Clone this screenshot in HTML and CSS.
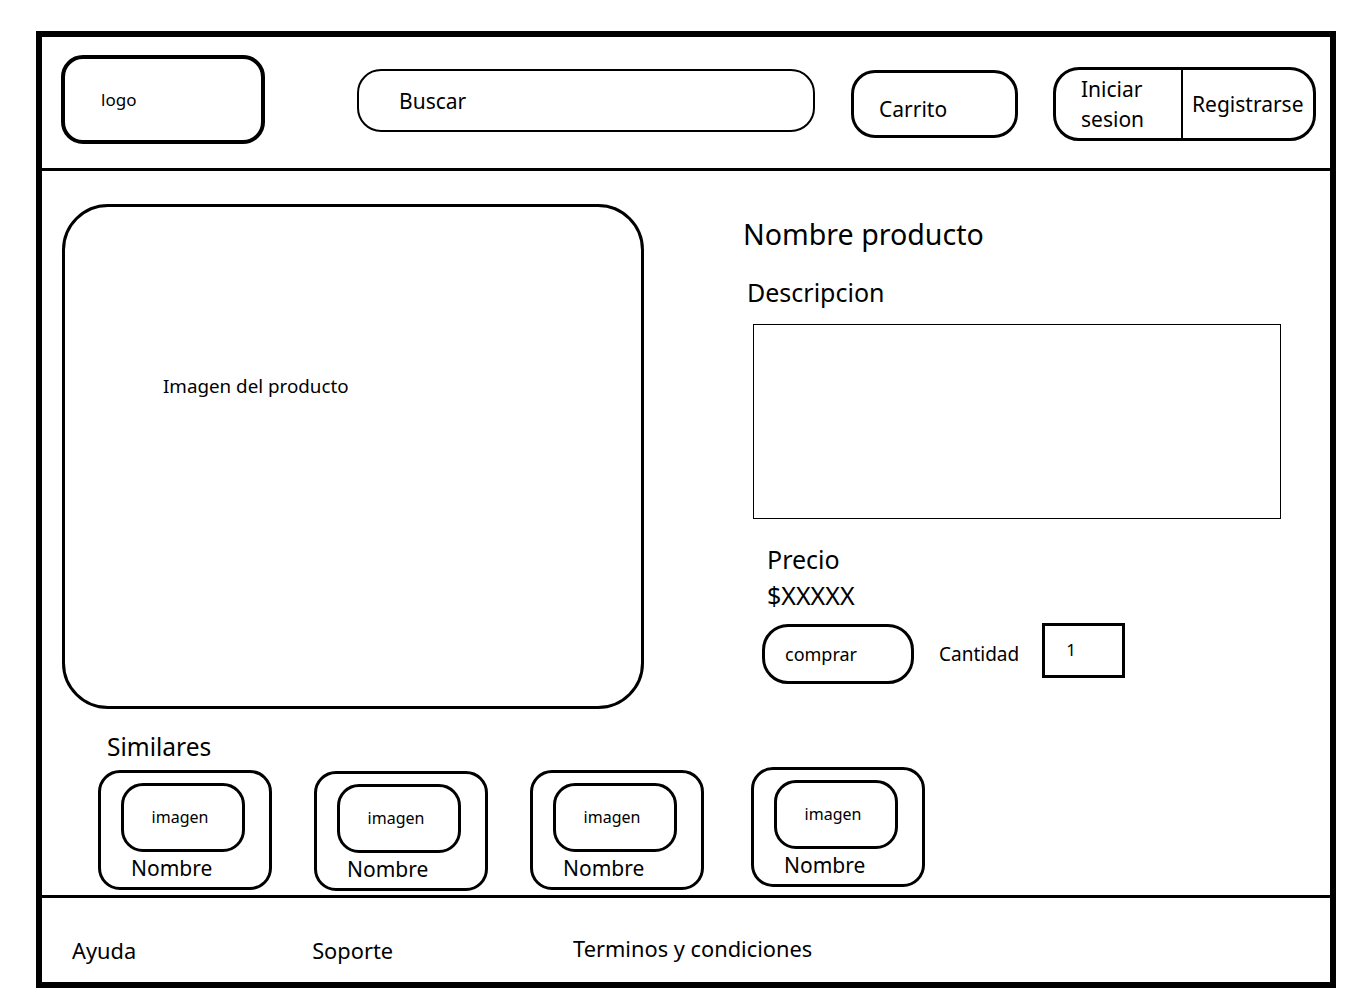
FILE: index.html
```html
<!DOCTYPE html>
<html lang="es">
<head>
  <meta charset="UTF-8" />
  <meta name="viewport" content="width=device-width, initial-scale=1.0" />
  <title>Producto</title>
  <link rel="stylesheet" href="styles.css">
</head>
<body>
  <div class="page">

    <!-- Header -->
    <header class="header">
      <div class="logo">logo</div>
      <div class="search">Buscar</div>
      <div class="cart">Carrito</div>
      <div class="auth">
        <div class="login">Iniciar<br>sesion</div>
        <div class="register">Registrarse</div>
      </div>
    </header>

    <!-- Producto -->
    <main class="main">
      <div class="product">
        <div class="product-image">Imagen del producto</div>

        <div class="details">
          <h1 class="title">Nombre producto</h1>
          <div class="desc-label">Descripcion</div>
          <div class="desc-box"></div>
          <div class="price">Precio<br>$XXXXX</div>
          <div class="actions">
            <div class="buy">comprar</div>
            <div class="qty-label">Cantidad</div>
            <div class="qty">1</div>
          </div>
        </div>
      </div>

      <div class="similar-title">Similares</div>
      <div class="similar">
        <div class="card">
          <div class="card-img">imagen</div>
          <div class="card-name">Nombre</div>
        </div>
        <div class="card card-2">
          <div class="card-img">imagen</div>
          <div class="card-name">Nombre</div>
        </div>
        <div class="card">
          <div class="card-img">imagen</div>
          <div class="card-name">Nombre</div>
        </div>
        <div class="card card-4">
          <div class="card-img">imagen</div>
          <div class="card-name">Nombre</div>
        </div>
      </div>
    </main>

    <!-- Footer -->
    <footer class="footer">
      <span class="help">Ayuda</span>
      <span class="support">Soporte</span>
      <span class="terms">Terminos y condiciones</span>
    </footer>

  </div>
</body>
</html>
```

FILE: styles.css
```css
body {
  margin: 0;
  background: #fff;
  color: #000;
  font-family: 'Noto Sans', 'Open Sans', sans-serif;
}

.page {
  margin: 31px 0 0 36px;
  width: 1300px;
  height: 957px;
  border: 6px solid #000;
  box-sizing: border-box;
  display: flex;
  flex-direction: column;
}

/* Header */

.header {
  height: 134px;
  border-bottom: 3px solid #000;
  box-sizing: border-box;
  display: flex;
  align-items: flex-start;
  flex-shrink: 0;
}

.logo {
  margin: 18px 0 0 19px;
  width: 204px;
  height: 89px;
  border: 4px solid #000;
  border-radius: 22px;
  box-sizing: border-box;
  padding-left: 36px;
  display: flex;
  align-items: center;
  font-size: 17px;
}

.search {
  margin: 32px 0 0 92px;
  width: 458px;
  height: 63px;
  border: 2px solid #000;
  border-radius: 24px;
  box-sizing: border-box;
  padding-left: 40px;
  display: flex;
  align-items: center;
  font-size: 21px;
}

.cart {
  margin: 33px 0 0 36px;
  width: 167px;
  height: 68px;
  border: 3px solid #000;
  border-radius: 24px;
  box-sizing: border-box;
  padding: 10px 0 0 25px;
  display: flex;
  align-items: center;
  font-size: 21px;
}

.auth {
  margin: 30px 0 0 35px;
  width: 263px;
  height: 74px;
  border: 3px solid #000;
  border-radius: 26px;
  box-sizing: border-box;
  display: flex;
  font-size: 21px;
}

.login {
  width: 127px;
  padding-left: 25px;
  box-sizing: border-box;
  line-height: 30px;
  display: flex;
  align-items: center;
  border-right: 2px solid #000;
}

.register {
  padding-left: 9px;
  display: flex;
  align-items: center;
}

/* Main */

.main {
  flex: 1;
  border-bottom: 3px solid #000;
}

.product {
  display: flex;
  align-items: flex-start;
}

.product-image {
  margin: 33px 0 0 20px;
  width: 582px;
  height: 505px;
  border: 3px solid #000;
  border-radius: 46px;
  box-sizing: border-box;
  padding: 167px 0 0 98px;
  font-size: 18.8px;
  line-height: 24px;
}

.details {
  margin-left: 99px;
  padding-top: 46px;
}

.title {
  margin: 0;
  font-size: 28.6px;
  font-weight: 400;
  line-height: 34px;
}

.desc-label {
  margin: 26px 0 0 4px;
  font-size: 25px;
  line-height: 30px;
}

.desc-box {
  margin: 17px 0 0 10px;
  width: 528px;
  height: 195px;
  border: 1px solid #000;
  box-sizing: border-box;
}

.price {
  margin: 22px 0 0 24px;
  font-size: 25px;
  line-height: 36px;
}

.actions {
  margin: 11px 0 0 19px;
  display: flex;
  align-items: center;
}

.buy {
  width: 152px;
  height: 60px;
  border: 3px solid #000;
  border-radius: 26px;
  box-sizing: border-box;
  padding-left: 20px;
  display: flex;
  align-items: center;
  font-size: 18px;
}

.qty-label {
  margin-left: 25px;
  font-size: 19px;
}

.qty {
  margin: -8px 0 0 23px;
  width: 83px;
  height: 55px;
  border: 3px solid #000;
  box-sizing: border-box;
  padding: 13px 0 0 21px;
  font-size: 17px;
  line-height: 22px;
}

/* Similares */

.similar-title {
  margin: 23px 0 0 65px;
  font-size: 24.5px;
  line-height: 30px;
}

.similar {
  margin: 8px 0 0 56px;
  display: flex;
  align-items: flex-start;
}

.card {
  width: 174px;
  height: 120px;
  border: 3px solid #000;
  border-radius: 22px;
  box-sizing: border-box;
  margin-right: 42px;
  padding: 10px 0 0 20px;
}

.card-2 {
  margin-top: 1px;
}

.card-4 {
  margin: -3px 0 0 5px;
}

.card-img {
  width: 124px;
  height: 69px;
  border: 3px solid #000;
  border-radius: 22px;
  box-sizing: border-box;
  padding: 0 6px 2px 0;
  display: flex;
  align-items: center;
  justify-content: center;
  font-size: 16px;
}

.card-name {
  margin: 2px 0 0 10px;
  font-size: 21px;
  line-height: 28px;
}

/* Footer */

.footer {
  height: 84px;
  flex-shrink: 0;
  display: flex;
  align-items: center;
  padding-top: 20px;
  box-sizing: border-box;
  font-size: 21.8px;
}

.help {
  margin-left: 30px;
}

.support {
  margin-left: 176px;
}

.terms {
  margin: -4px 0 0 180px;
}
```
